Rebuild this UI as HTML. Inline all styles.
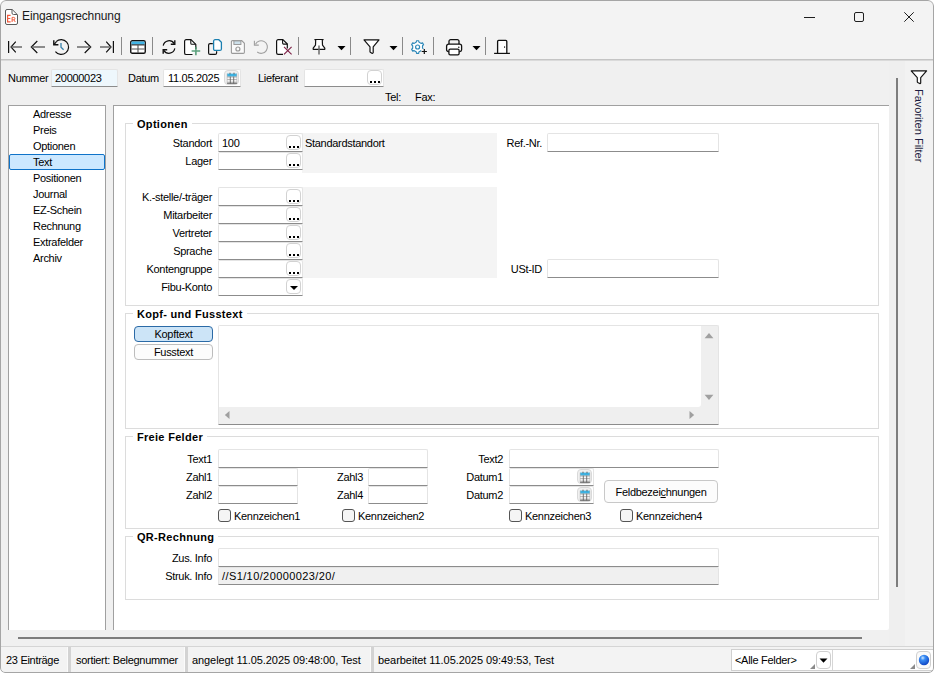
<!DOCTYPE html>
<html><head><meta charset="utf-8">
<style>
*{box-sizing:border-box;margin:0;padding:0}
html,body{width:934px;height:673px;overflow:hidden;background:#fff}
#w{position:absolute;left:0;top:0;width:934px;height:673px;border-radius:6px 6px 5px 5px;overflow:hidden;background:#f0f0f0}
body{position:relative;font-family:"Liberation Sans",sans-serif;font-size:11px;color:#000;letter-spacing:-0.3px}
.a{position:absolute}
svg{position:absolute;overflow:visible}
.lbl{position:absolute;white-space:nowrap;text-align:right;line-height:13px}
.tl{position:absolute;white-space:nowrap;line-height:13px}
.inp{position:absolute;height:18px;background:#fff;border:1px solid #e4e4e4;border-bottom:1px solid #8c8c8c;border-radius:2px 2px 0 0}
.inp span{position:absolute;left:3px;top:2px;line-height:13px}
.dots{position:absolute;right:1px;top:0;width:15px;height:15px;border:1px solid #d2d2d2;border-radius:4px;background:#fff}
.dots:after{content:"";position:absolute;left:2px;top:10px;width:2px;height:2px;background:#000;box-shadow:4px 0 #000,8px 0 #000}
.dd{position:absolute;right:1px;top:0;width:15px;height:15px;border:1px solid #d2d2d2;border-radius:4px;background:#fff}
.dd:after{content:"";position:absolute;left:3px;top:6px;border-left:4px solid transparent;border-right:4px solid transparent;border-top:4px solid #000}
.grp{position:absolute;border:1px solid #dcdcdc}
.gt{position:absolute;font-weight:bold;background:#fff;padding:0 4px;line-height:13px;white-space:nowrap;letter-spacing:0.3px}
.shade{position:absolute;background:#f4f4f4}
.nav{position:absolute;left:33px;line-height:13px;white-space:nowrap}
.cb{position:absolute;width:13px;height:13px;border:1px solid #555;border-radius:3px;background:#f5f5f5}
.sb{position:absolute;top:647px;height:25px;line-height:27px;white-space:nowrap;background:#f3f3f3}
.sbsep{position:absolute;top:647px;height:25px;width:3px;background:#d3d3d3;box-shadow:-1px 0 #fbfbfb,1px 0 #fbfbfb}
.sep{position:absolute;top:37px;width:1px;height:18px;background:#8a8a8a}
.kbtn{position:absolute;width:79px;height:16px;border:1px solid #bdbdbd;border-radius:4px;background:#fcfcfc;text-align:center;line-height:15px;white-space:nowrap}
.kbtn.sel{background:#cce4f7;border-color:#2b6aa6}
.cal{position:absolute;right:1px;top:0;width:15px;height:15px;border:1px solid #d9d9d9;border-radius:4px;background:#f0f0f0}
.cal svg{left:1px;top:1px}
.inp.f{margin-top:-1px;height:19px}
.inp.f span{top:3px}
.inp.f .dots,.inp.f .cal,.inp.f .dd{top:1px}
</style></head><body><div id="w">
<div class="a" style="left:0;top:0;width:934px;height:61px;background:#f3f3f3"></div>
<div class="a" style="left:0;top:0;width:934px;height:673px;border:1px solid #a5a5a5;border-radius:6px 6px 5px 5px;pointer-events:none;z-index:50"></div>
<svg style="left:5px;top:9px" width="13" height="16" viewBox="0 0 13 16">
<path d="M2 0.5h5.2l5.3 5.3v8.2a1.5 1.5 0 0 1 -1.5 1.5h-9a1.5 1.5 0 0 1 -1.5 -1.5v-12a1.5 1.5 0 0 1 1.5 -1.5z" fill="#fff" stroke="#5a5a5a" stroke-width="1"/>
<path d="M7 0.7v3.3a1.5 1.5 0 0 0 1.5 1.5h3.8" fill="none" stroke="#5a5a5a" stroke-width="1"/>
<path d="M5.6 6.3h-3v6.6h3M2.6 9.5h2.7" fill="none" stroke="#f25a3c" stroke-width="1.2"/>
<path d="M7.1 13v-4.6h1.6a1.2 1.2 0 0 1 0 2.4h-1.6M8.8 10.8l1.5 2.2" fill="none" stroke="#f25a3c" stroke-width="1"/>
</svg>
<div class="tl" style="left:22px;top:9px;font-size:12px;line-height:15px;letter-spacing:-0.1px;color:#1a1a1a">Eingangsrechnung</div>
<div class="a" style="left:804px;top:17px;width:11px;height:1px;background:#1e1e1e"></div>
<div class="a" style="left:854px;top:12px;width:10px;height:10px;border:1px solid #1e1e1e;border-radius:2px"></div>
<svg style="left:904px;top:12px" width="10" height="10" viewBox="0 0 10 10"><path d="M0.3 0.3L9.7 9.7M9.7 0.3L0.3 9.7" stroke="#1e1e1e" stroke-width="1"/></svg>
<svg style="left:7px;top:40px" width="16" height="14" viewBox="0 0 16 14"><path d="M1.6 1v12" stroke="#111" stroke-width="1.2"/><path d="M8.8 1.7L4 7l4.8 5.3" fill="none" stroke="#111" stroke-width="1.2"/><path d="M4.3 7H15" stroke="#6a6a6a" stroke-width="1.6"/></svg>
<svg style="left:30px;top:40px" width="16" height="14" viewBox="0 0 16 14"><path d="M7.3 1L1.3 7l6 6" fill="none" stroke="#111" stroke-width="1.2"/><path d="M1.6 7H15" stroke="#6a6a6a" stroke-width="1.6"/></svg>
<svg style="left:52px;top:38px" width="18" height="18" viewBox="0 0 18 18"><path d="M4.1 3.6A7.4 7.4 0 1 1 3.4 13.6" fill="none" stroke="#111" stroke-width="1.2"/><path d="M1.8 2.2v4.6h4.6" fill="none" stroke="#111" stroke-width="1.4"/><path d="M1.9 6.7L4.3 3.8" stroke="#111" stroke-width="1.2"/><path d="M9 4.9v4.3l2.6 2.5" fill="none" stroke="#3a82ab" stroke-width="1.3"/></svg>
<svg style="left:76px;top:40px" width="16" height="14" viewBox="0 0 16 14"><path d="M8.7 1l6 6-6 6" fill="none" stroke="#111" stroke-width="1.2"/><path d="M1 7H14.4" stroke="#6a6a6a" stroke-width="1.6"/></svg>
<svg style="left:99px;top:40px" width="16" height="14" viewBox="0 0 16 14"><path d="M7.2 1.7L12 7l-4.8 5.3" fill="none" stroke="#111" stroke-width="1.2"/><path d="M1 7H11.7" stroke="#6a6a6a" stroke-width="1.6"/><path d="M14.4 1v12" stroke="#111" stroke-width="1.2"/></svg>
<div class="sep" style="left:121px"></div>
<svg style="left:130px;top:40px" width="16" height="14" viewBox="0 0 16 14"><rect x="0.75" y="0.75" width="14.5" height="12.5" rx="1.6" fill="#fff" stroke="#111" stroke-width="1.4"/><rect x="1.5" y="1.5" width="13" height="3" fill="#41b4e6"/><path d="M1.5 4.9h13" stroke="#111" stroke-width="1"/><path d="M1.5 9h13M8 5v8" stroke="#555" stroke-width="1.1"/></svg>
<div class="sep" style="left:152px"></div>
<svg style="left:161px;top:39px" width="16" height="16" viewBox="0 0 16 16"><path d="M2.2 6.6A6 6 0 0 1 13.2 4.6" fill="none" stroke="#111" stroke-width="1.2"/><path d="M13.8 1.3v4h-4" fill="none" stroke="#111" stroke-width="1.4"/><path d="M13.8 9.4A6 6 0 0 1 2.8 11.4" fill="none" stroke="#111" stroke-width="1.2"/><path d="M2.2 14.7v-4h4" fill="none" stroke="#111" stroke-width="1.4"/></svg>
<svg style="left:184px;top:39px" width="18" height="17" viewBox="0 0 18 17"><path d="M8.5 15.5h-6.3a1.6 1.6 0 0 1 -1.6 -1.6v-11.7a1.6 1.6 0 0 1 1.6 -1.6h4.8l4.8 4.8v4.5" fill="#fff" stroke="#111" stroke-width="1.2" stroke-linejoin="round"/><path d="M6.8 0.7v3.5a1.1 1.1 0 0 0 1.1 1.1h3.7" fill="none" stroke="#111" stroke-width="1.1"/><path d="M7.6 12h8.6M11.9 7.7v8.6" stroke="#4a9870" stroke-width="1.6" opacity="0.9"/></svg>
<svg style="left:208px;top:39px" width="15" height="17" viewBox="0 0 15 17"><path d="M4.8 4.6H2.1a1.5 1.5 0 0 0 -1.5 1.5v7.8a1.5 1.5 0 0 0 1.5 1.5h5a1.5 1.5 0 0 0 1.5 -1.5v-1.6" fill="none" stroke="#111" stroke-width="1.2"/><path d="M7.1 0.7h3.7l2.6 2.6v6.6a1.5 1.5 0 0 1 -1.5 1.5h-4.8a1.5 1.5 0 0 1 -1.5 -1.5v-7.7a1.5 1.5 0 0 1 1.5 -1.5z" fill="#fff" stroke="#1a7fb0" stroke-width="1.3"/></svg>
<svg style="left:231px;top:40px" width="14" height="14" viewBox="0 0 14 14"><path d="M1.6 0.6h9.1l2.7 2.7v8.9a1.2 1.2 0 0 1 -1.2 1.2h-10.6a1.2 1.2 0 0 1 -1.2 -1.2v-10.4a1.2 1.2 0 0 1 1.2 -1.2z" fill="#fafafa" stroke="#9a9a9a" stroke-width="1.1"/><rect x="2.9" y="0.9" width="7" height="3.6" fill="#cde0ea" stroke="#9a9a9a" stroke-width="1"/><circle cx="6.9" cy="9" r="2" fill="none" stroke="#9a9a9a" stroke-width="1.2"/></svg>
<svg style="left:253px;top:40px" width="15" height="14" viewBox="0 0 15 14"><path d="M2.5 4.2A6.3 6.3 0 1 1 4.2 12" fill="none" stroke="#a0a0a0" stroke-width="1.1"/><path d="M1.4 0.7v4.4h4.4" fill="none" stroke="#a0a0a0" stroke-width="1.1"/></svg>
<svg style="left:276px;top:39px" width="18" height="17" viewBox="0 0 18 17"><path d="M11.3 9.6V5L6.9 0.6H2.2a1.6 1.6 0 0 0 -1.6 1.6v11.6a1.6 1.6 0 0 0 1.6 1.6H7" fill="#fff" stroke="#111" stroke-width="1.2" stroke-linejoin="round"/><path d="M6.6 0.7v3.4a1 1 0 0 0 1 1h3.7" fill="none" stroke="#111" stroke-width="1.1"/><path d="M8 7.8l7.6 7.6M15.6 7.8l-7.6 7.6" stroke="#7d1f45" stroke-width="1.1"/></svg>
<div class="sep" style="left:298px"></div>
<svg style="left:312px;top:39px" width="14" height="17" viewBox="0 0 14 17"><path d="M2.4 0.6h9.2" stroke="#111" stroke-width="1.2"/><path d="M3.7 0.9L3.5 6.1L1.2 9.2V10.3H12.8V9.2L10.5 6.1L10.3 0.9" fill="#fff" stroke="#111" stroke-width="1.2" stroke-linejoin="round"/><path d="M7 6.5V15.6" stroke="#6a6a6a" stroke-width="1.5"/></svg>
<svg style="left:337px;top:45px" width="9" height="6" viewBox="0 0 9 6"><path d="M0.5 0.9h8l-4 4.4z" fill="#000"/></svg>
<div class="sep" style="left:350px"></div>
<svg style="left:363px;top:39px" width="17" height="16" viewBox="0 0 17 16"><path d="M1 0.9h15l-5.8 6.9v5.8a0.9 0.9 0 0 1 -1.3 0.6l-1.6-0.9a0.6 0.6 0 0 1 -0.3 -0.5v-5z" fill="#fff" stroke="#111" stroke-width="1.2" stroke-linejoin="round"/></svg>
<svg style="left:389px;top:45px" width="9" height="6" viewBox="0 0 9 6"><path d="M0.5 0.9h8l-4 4.4z" fill="#000"/></svg>
<div class="sep" style="left:402px"></div>
<svg style="left:410px;top:40px" width="18" height="15" viewBox="0 0 18 15"><path d="M5.45 2.60 L6.34 1.95 L6.49 0.70 L8.71 0.70 L8.86 1.95 L9.75 2.60 L10.34 2.94 L11.34 3.39 L12.50 2.89 L13.61 4.81 L12.60 5.57 L12.49 6.66 L12.49 7.34 L12.60 8.43 L13.61 9.19 L12.50 11.11 L11.34 10.61 L10.34 11.06 L9.75 11.40 L8.86 12.05 L8.71 13.30 L6.49 13.30 L6.34 12.05 L5.45 11.40 L4.86 11.06 L3.86 10.61 L2.70 11.11 L1.59 9.19 L2.60 8.43 L2.71 7.34 L2.71 6.66 L2.60 5.57 L1.59 4.81 L2.70 2.89 L3.86 3.39 L4.86 2.94Z" fill="#fff" stroke="#2c88b8" stroke-width="1.15" stroke-linejoin="round"/><circle cx="7.6" cy="7" r="2" fill="none" stroke="#2c88b8" stroke-width="1.2"/><rect x="11.2" y="8.8" width="6.6" height="6" fill="#f3f3f3"/><path d="M11.7 11.5h5.2M14.3 8.9v5.2" stroke="#111" stroke-width="1.2"/></svg>
<div class="sep" style="left:433px"></div>
<svg style="left:446px;top:39px" width="17" height="17" viewBox="0 0 17 17"><path d="M3 5.5V2.3a1.7 1.7 0 0 1 1.7 -1.7h6.6a1.7 1.7 0 0 1 1.7 1.7V5.5" fill="none" stroke="#111" stroke-width="1.3"/><path d="M3 12.6h-0.6a1.8 1.8 0 0 1 -1.8 -1.8v-3.6a2 2 0 0 1 2 -2h11a2 2 0 0 1 2 2v3.6a1.8 1.8 0 0 1 -1.8 1.8h-0.6" fill="#fff" stroke="#111" stroke-width="1.3"/><rect x="2.9" y="10.2" width="10.2" height="5.6" rx="1.3" fill="#fff" stroke="#111" stroke-width="1.3"/><circle cx="12.8" cy="8.3" r="0.75" fill="#111"/></svg>
<svg style="left:472px;top:45px" width="9" height="6" viewBox="0 0 9 6"><path d="M0.5 0.9h8l-4 4.4z" fill="#000"/></svg>
<div class="sep" style="left:485px"></div>
<svg style="left:493px;top:39px" width="17" height="16" viewBox="0 0 17 16"><rect x="4.6" y="1.6" width="9.2" height="12.6" fill="#fff"/><path d="M1.1 14.4h15.8" stroke="#111" stroke-width="1.2"/><path d="M4.6 14.2V2.4a1 1 0 0 1 1 -1h7.2a1 1 0 0 1 1 1V14.2" fill="none" stroke="#111" stroke-width="1.3"/><path d="M11.6 7.3v1.6" stroke="#111" stroke-width="0.9"/></svg>
<div class="a" style="left:1px;top:59px;width:932px;height:1px;background:#c4c4c4"></div>
<div class="a" style="left:1px;top:60px;width:932px;height:1px;background:#dadada"></div>
<div class="tl" style="left:8px;top:72px">Nummer</div>
<div class="inp" style="left:51px;top:69px;width:67px;height:18px;background:#eef7fc"><span style="top:2px">20000023</span></div>
<div class="tl" style="left:128px;top:72px">Datum</div>
<div class="inp" style="left:163px;top:69px;width:78px;height:18px"><span style="top:2px;left:4px">11.05.2025</span><div class="cal" style="top:0"><svg width="12" height="12" viewBox="0 0 12 12"><rect x="1" y="4.5" width="10" height="6.8" fill="#fafafa"/><rect x="1" y="1.6" width="10" height="3" fill="#3db3e3"/><path d="M4 0.7v1.6M8 0.7v1.6" stroke="#555" stroke-width="0.9"/><path d="M1 5h10M1 7.6h10M1 10.2h10" stroke="#a0a0a0" stroke-width="0.8"/><path d="M4.3 4.6v6.8M7.7 4.6v6.8" stroke="#666" stroke-width="0.9"/><path d="M1 11.3h10" stroke="#555" stroke-width="0.9"/><path d="M1.2 1.6v9.7M10.8 1.6v9.7" stroke="#b5b5b5" stroke-width="0.6"/></svg></div></div>
<div class="tl" style="left:258px;top:72px">Lieferant</div>
<div class="inp" style="left:304px;top:69px;width:80px;height:18px"><div class="dots"></div></div>
<div class="tl" style="left:385px;top:91px">Tel:</div>
<div class="tl" style="left:415px;top:91px">Fax:</div>
<div class="a" style="left:8px;top:105px;width:98px;height:525px;background:#fff;border:1px solid #a0a0a0;border-bottom:none"></div>
<div class="a" style="left:9px;top:154px;width:96px;height:16px;background:#cce8ff;border:1px solid #0f73c9;border-radius:2px"></div>
<div class="nav" style="top:108px">Adresse</div>
<div class="nav" style="top:124px">Preis</div>
<div class="nav" style="top:140px">Optionen</div>
<div class="nav" style="top:156px">Text</div>
<div class="nav" style="top:172px">Positionen</div>
<div class="nav" style="top:188px">Journal</div>
<div class="nav" style="top:204px">EZ-Schein</div>
<div class="nav" style="top:220px">Rechnung</div>
<div class="nav" style="top:236px">Extrafelder</div>
<div class="nav" style="top:252px">Archiv</div>
<div class="a" style="left:113px;top:105px;width:776px;height:525px;background:#fff;border-top:1px solid #a0a0a0;border-left:1px solid #a0a0a0;border-bottom-right-radius:2px"></div>
<div class="grp" style="left:125px;top:123px;width:754px;height:183px"></div>
<div class="gt" style="left:133px;top:118px">Optionen</div>
<div class="shade" style="left:302px;top:133px;width:195px;height:40px"></div>
<div class="shade" style="left:218px;top:187px;width:279px;height:91px"></div>
<div class="lbl" style="right:722px;top:137px">Standort</div>
<div class="inp f" style="left:218px;top:134px;width:85px;"><span>100</span><div class="dots"></div></div>
<div class="lbl" style="right:722px;top:155px">Lager</div>
<div class="inp" style="left:218px;top:152px;width:85px;"><div class="dots"></div></div>
<div class="lbl" style="right:722px;top:191px">K.-stelle/-träger</div>
<div class="inp f" style="left:218px;top:188px;width:85px;"><div class="dots"></div></div>
<div class="lbl" style="right:722px;top:209px">Mitarbeiter</div>
<div class="inp" style="left:218px;top:206px;width:85px;"><div class="dots"></div></div>
<div class="lbl" style="right:722px;top:227px">Vertreter</div>
<div class="inp" style="left:218px;top:224px;width:85px;"><div class="dots"></div></div>
<div class="lbl" style="right:722px;top:245px">Sprache</div>
<div class="inp" style="left:218px;top:242px;width:85px;"><div class="dots"></div></div>
<div class="lbl" style="right:722px;top:263px">Kontengruppe</div>
<div class="inp" style="left:218px;top:260px;width:85px;"><div class="dots"></div></div>
<div class="lbl" style="right:722px;top:281px">Fibu-Konto</div>
<div class="inp" style="left:218px;top:278px;width:85px;"><div class="dd"></div></div>
<div class="tl" style="left:305px;top:137px">Standardstandort</div>
<div class="lbl" style="right:392px;top:137px">Ref.-Nr.</div>
<div class="inp f" style="left:547px;top:134px;width:172px;"></div>
<div class="lbl" style="right:392px;top:263px">USt-ID</div>
<div class="inp f" style="left:547px;top:260px;width:172px;"></div>
<div class="grp" style="left:125px;top:313px;width:754px;height:116px"></div>
<div class="gt" style="left:133px;top:308px">Kopf- und Fusstext</div>
<div class="kbtn sel" style="left:134px;top:326px">Kopftext</div>
<div class="kbtn" style="left:134px;top:344px">Fusstext</div>
<div class="a" style="left:218px;top:325px;width:501px;height:100px;background:#efefef;border:1px solid #e4e4e4;border-bottom:1px solid #8c8c8c;border-radius:2px 2px 0 0"></div>
<div class="a" style="left:219px;top:326px;width:482px;height:81px;background:#fff;border-bottom-right-radius:3px"></div>
<svg style="left:704px;top:332px" width="10" height="7" viewBox="0 0 10 7"><path d="M0.6 6.2L5 1L9.4 6.2z" fill="#a0a0a0"/></svg>
<svg style="left:704px;top:394px" width="10" height="7" viewBox="0 0 10 7"><path d="M0.6 0.8L5 6L9.4 0.8z" fill="#a0a0a0"/></svg>
<svg style="left:224px;top:410px" width="6" height="10" viewBox="0 0 6 10"><path d="M5.5 1L0.8 5L5.5 9z" fill="#a0a0a0"/></svg>
<svg style="left:689px;top:410px" width="6" height="10" viewBox="0 0 6 10"><path d="M0.5 1L5.2 5L0.5 9z" fill="#a0a0a0"/></svg>
<div class="grp" style="left:125px;top:436px;width:754px;height:93px"></div>
<div class="gt" style="left:133px;top:431px">Freie Felder</div>
<div class="lbl" style="right:722px;top:453px">Text1</div>
<div class="inp f" style="left:218px;top:450px;width:210px;"></div>
<div class="lbl" style="right:722px;top:471px">Zahl1</div>
<div class="inp" style="left:218px;top:468px;width:80px;"></div>
<div class="lbl" style="right:722px;top:489px">Zahl2</div>
<div class="inp" style="left:218px;top:486px;width:80px;"></div>
<div class="lbl" style="right:571px;top:471px">Zahl3</div>
<div class="inp" style="left:368px;top:468px;width:60px;"></div>
<div class="lbl" style="right:571px;top:489px">Zahl4</div>
<div class="inp" style="left:368px;top:486px;width:60px;"></div>
<div class="lbl" style="right:431px;top:453px">Text2</div>
<div class="inp f" style="left:509px;top:450px;width:210px;"></div>
<div class="lbl" style="right:431px;top:471px">Datum1</div>
<div class="inp" style="left:509px;top:468px;width:85px;"><div class="cal"><svg width="12" height="12" viewBox="0 0 12 12"><rect x="1" y="4.5" width="10" height="6.8" fill="#fafafa"/><rect x="1" y="1.6" width="10" height="3" fill="#3db3e3"/><path d="M4 0.7v1.6M8 0.7v1.6" stroke="#555" stroke-width="0.9"/><path d="M1 5h10M1 7.6h10M1 10.2h10" stroke="#a0a0a0" stroke-width="0.8"/><path d="M4.3 4.6v6.8M7.7 4.6v6.8" stroke="#666" stroke-width="0.9"/><path d="M1 11.3h10" stroke="#555" stroke-width="0.9"/><path d="M1.2 1.6v9.7M10.8 1.6v9.7" stroke="#b5b5b5" stroke-width="0.6"/></svg></div></div>
<div class="lbl" style="right:431px;top:489px">Datum2</div>
<div class="inp" style="left:509px;top:486px;width:85px;"><div class="cal"><svg width="12" height="12" viewBox="0 0 12 12"><rect x="1" y="4.5" width="10" height="6.8" fill="#fafafa"/><rect x="1" y="1.6" width="10" height="3" fill="#3db3e3"/><path d="M4 0.7v1.6M8 0.7v1.6" stroke="#555" stroke-width="0.9"/><path d="M1 5h10M1 7.6h10M1 10.2h10" stroke="#a0a0a0" stroke-width="0.8"/><path d="M4.3 4.6v6.8M7.7 4.6v6.8" stroke="#666" stroke-width="0.9"/><path d="M1 11.3h10" stroke="#555" stroke-width="0.9"/><path d="M1.2 1.6v9.7M10.8 1.6v9.7" stroke="#b5b5b5" stroke-width="0.6"/></svg></div></div>
<div class="kbtn" style="left:604px;top:480px;width:114px;height:23px;line-height:23px;border-radius:4px;border-color:#c8c8c8">Feldbezei<u style="text-underline-offset:1px">c</u>hnungen</div>
<div class="cb" style="left:218px;top:509px"></div><div class="tl" style="left:234px;top:510px">Kennzeichen1</div>
<div class="cb" style="left:342px;top:509px"></div><div class="tl" style="left:358px;top:510px">Kennzeichen2</div>
<div class="cb" style="left:509px;top:509px"></div><div class="tl" style="left:525px;top:510px">Kennzeichen3</div>
<div class="cb" style="left:620px;top:509px"></div><div class="tl" style="left:636px;top:510px">Kennzeichen4</div>
<div class="grp" style="left:125px;top:536px;width:754px;height:64px"></div>
<div class="gt" style="left:133px;top:531px">QR-Rechnung</div>
<div class="lbl" style="right:722px;top:552px">Zus. Info</div>
<div class="inp f" style="left:218px;top:549px;width:501px;"></div>
<div class="lbl" style="right:722px;top:570px">Struk. Info</div>
<div class="inp" style="left:218px;top:567px;width:501px;background:#f0f0f0"><span style="letter-spacing:0.4px">//S1/10/20000023/20/</span></div>
<div class="a" style="left:889px;top:61px;width:16px;height:585px;background:#efefef"></div>
<div class="a" style="left:905px;top:61px;width:28px;height:585px;background:#f2f2f2"></div>
<div class="a" style="left:896px;top:78px;width:2px;height:509px;background:#7d7d7d"></div>
<svg style="left:910px;top:70px" width="18" height="15" viewBox="0 0 18 15"><path d="M1.2 0.9H16.6L10.7 7.7V13.1a0.6 0.6 0 0 1 -0.9 0.5L7.7 12.5a0.8 0.8 0 0 1 -0.4 -0.7V7.7Z" fill="#fff" stroke="#111" stroke-width="1.15" stroke-linejoin="round"/></svg>
<div class="tl" style="left:925px;top:89px;transform-origin:0 0;transform:rotate(90deg);color:#1c1c40;letter-spacing:0px">Favoriten Filter</div>
<div class="a" style="left:18px;top:637px;width:844px;height:2px;background:#7d7d7d"></div>
<div class="a" style="left:1px;top:646px;width:932px;height:1px;background:#d5d5d5"></div>
<div class="sb" style="left:1px;width:67px;padding-left:5px">23 Einträge</div>
<div class="sbsep" style="left:68px"></div>
<div class="sb" style="left:71px;width:114px;padding-left:5px">sortiert: Belegnummer</div>
<div class="sbsep" style="left:185px"></div>
<div class="sb" style="left:188px;width:183px;padding-left:4px;letter-spacing:-0.08px">angelegt 11.05.2025 09:48:00, Test</div>
<div class="sbsep" style="left:371px"></div>
<div class="sb" style="left:374px;width:559px;padding-left:4px;letter-spacing:-0.06px">bearbeitet 11.05.2025 09:49:53, Test</div>
<div class="a" style="left:731px;top:649px;width:202px;height:22px;background:#fff;border:1px solid #d0d0d0;border-right:none"></div>
<div class="a" style="left:832px;top:650px;width:1px;height:20px;background:#d6d6d6"></div>
<div class="tl" style="left:735px;top:654px">&lt;Alle Felder&gt;</div>
<svg style="left:810px;top:664px" width="5" height="5" viewBox="0 0 5 5"><path d="M5 0V5H0z" fill="#8a8a8a"/></svg>
<div class="a" style="left:816px;top:651px;width:15px;height:18px;background:#fff;border:1px solid #cfcfcf;border-radius:4px"></div>
<svg style="left:819px;top:658px" width="9" height="5" viewBox="0 0 9 5"><path d="M0.5 0.4h8l-4 4.4z" fill="#000"/></svg>
<svg style="left:910px;top:664px" width="5" height="5" viewBox="0 0 5 5"><path d="M5 0V5H0z" fill="#8a8a8a"/></svg>
<div class="a" style="left:916px;top:651px;width:15px;height:18px;background:#fafafa;border:1px solid #cfcfcf;border-radius:4px"></div>
<svg style="left:916px;top:653px" width="16" height="14" viewBox="0 0 16 14"><defs><radialGradient id="gb" cx="0.38" cy="0.3" r="0.75"><stop offset="0" stop-color="#d0e8ff"/><stop offset="0.3" stop-color="#3a8ef5"/><stop offset="1" stop-color="#0a3fc0"/></radialGradient></defs><circle cx="8" cy="7" r="5.2" fill="url(#gb)"/></svg>
</div></body></html>
